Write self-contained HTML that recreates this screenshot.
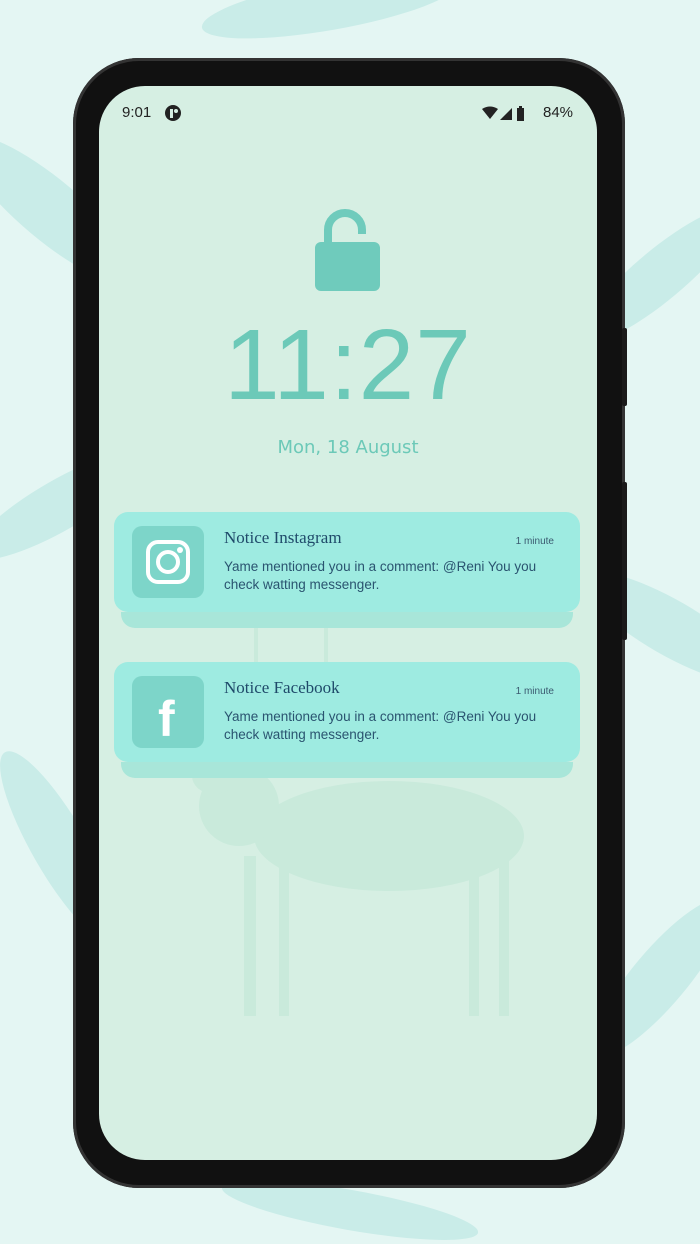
<!DOCTYPE html>
<html><head><meta charset="utf-8"><style>
html,body{margin:0;width:700px;height:1244px;overflow:hidden}
body{background:#e4f6f3;position:relative;font-family:"Liberation Sans",sans-serif}
.leaf{position:absolute;background:#c9ece8;border-radius:50%}
.phone{position:absolute;left:73px;top:58px;width:552px;height:1130px;background:#111;border-radius:66px;box-shadow:inset 0 0 0 3px #333}
.btn{position:absolute;background:#1a1a1a;width:5px;border-radius:2px}
.screen{position:absolute;left:99px;top:86px;width:498px;height:1074px;background:#d6efe3;border-radius:46px;overflow:hidden}
.sb{position:absolute;top:18px;font-size:15px;color:#222}
.card{position:absolute;left:15px;width:466px;height:100px;background:#9eebe1;border-radius:14px}
.under{position:absolute;left:22px;width:452px;background:#a8e6d9;border-radius:0 0 14px 14px}
.ic{position:absolute;left:18px;top:14px;width:72px;height:72px;background:#7dd5c9;border-radius:10px}
.t{position:absolute;left:110px;top:16px;font-size:17px;color:#1f4a6a;font-family:"Liberation Serif",serif}
.m{position:absolute;right:26px;top:24px;font-size:10px;color:#3b5a70}
.b{position:absolute;left:110px;top:46px;width:320px;font-size:13.5px;line-height:18px;color:#2a5470}
</style></head><body>
<div class="leaf" style="left:-60px;top:180px;width:220px;height:60px;transform:rotate(40deg)"></div>
<div class="leaf" style="left:-40px;top:480px;width:200px;height:50px;transform:rotate(-30deg)"></div>
<div class="leaf" style="left:-50px;top:820px;width:220px;height:55px;transform:rotate(60deg)"></div>
<div class="leaf" style="left:560px;top:250px;width:200px;height:50px;transform:rotate(-40deg)"></div>
<div class="leaf" style="left:570px;top:600px;width:200px;height:55px;transform:rotate(30deg)"></div>
<div class="leaf" style="left:560px;top:950px;width:200px;height:55px;transform:rotate(-50deg)"></div>
<div class="leaf" style="left:200px;top:-20px;width:260px;height:50px;transform:rotate(-10deg)"></div>
<div class="leaf" style="left:220px;top:1190px;width:260px;height:40px;transform:rotate(10deg)"></div>
<div class="phone"></div>
<div class="btn" style="left:622px;top:328px;height:78px"></div>
<div class="btn" style="left:622px;top:482px;height:158px"></div>
<div class="screen">
 <div class="sb" style="left:23px">9:01</div>
 <div style="position:absolute;left:66px;top:19px;width:16px;height:16px;border-radius:50%;background:#222"><div style="position:absolute;left:5px;top:4px;width:3px;height:9px;background:#d6efe3"></div><div style="position:absolute;left:9px;top:4px;width:4px;height:4px;border-radius:50%;background:#d6efe3"></div></div>
 <svg style="position:absolute;left:383px;top:20px" width="60" height="16"><path d="M0 3 Q8 -2 16 3 L8 13Z" fill="#222"/><path d="M18 14 L30 2 L30 14Z" fill="#222"/><rect x="35" y="2" width="7" height="13" fill="#222"/><rect x="37" y="0" width="3" height="2" fill="#222"/></svg>
 <div class="sb" style="left:444px">84%</div>
 <svg style="position:absolute;left:215px;top:122px" width="66" height="84"><path d="M14 34 V22 A17 17 0 0 1 48 22 V26" stroke="#6fcbbc" stroke-width="8" fill="none"/><rect x="1" y="34" width="65" height="49" rx="6" fill="#6fcbbc"/></svg>
 <div style="position:absolute;left:0;width:498px;top:222px;text-align:center;font-family:'Liberation Sans',sans-serif;font-size:100px;color:#6cc9b8;letter-spacing:1px">11:27</div>
 <div style="position:absolute;left:0;width:498px;top:351px;text-align:center;font-family:'DejaVu Sans',sans-serif;font-size:18px;color:#6cc9b8">Mon, 18 August</div>
 <svg style="position:absolute;left:80px;top:520px" width="380" height="420" opacity="0.55"><g fill="#bfe7d6"><ellipse cx="210" cy="230" rx="135" ry="55"/><ellipse cx="60" cy="200" rx="40" ry="40"/><ellipse cx="35" cy="170" rx="22" ry="18"/><rect x="65" y="250" width="12" height="160"/><rect x="100" y="260" width="10" height="150"/><rect x="290" y="260" width="10" height="150"/><rect x="320" y="250" width="10" height="160"/><rect x="75" y="0" width="4" height="140"/><rect x="145" y="0" width="4" height="140"/></g></svg>
 <div class="under" style="top:526px;height:16px"></div>
 <div class="card" style="top:426px"><div class="ic"><svg width="72" height="72"><rect x="16" y="16" width="40" height="40" rx="10" stroke="#fff" stroke-width="4" fill="none"/><circle cx="36" cy="36" r="10" stroke="#fff" stroke-width="4" fill="none"/><circle cx="48" cy="24" r="3" fill="#fff"/></svg></div><div class="t">Notice Instagram</div><div class="m">1 minute</div><div class="b">Yame mentioned you in a comment: @Reni You you check watting messenger.</div></div>
 <div class="under" style="top:676px;height:16px"></div>
 <div class="card" style="top:576px"><div class="ic"><div style="position:absolute;left:26px;top:14px;font-size:50px;font-weight:bold;color:#fff;font-family:'Liberation Sans',sans-serif">f</div></div><div class="t">Notice Facebook</div><div class="m">1 minute</div><div class="b">Yame mentioned you in a comment: @Reni You you check watting messenger.</div></div>
</div>
</body></html>
